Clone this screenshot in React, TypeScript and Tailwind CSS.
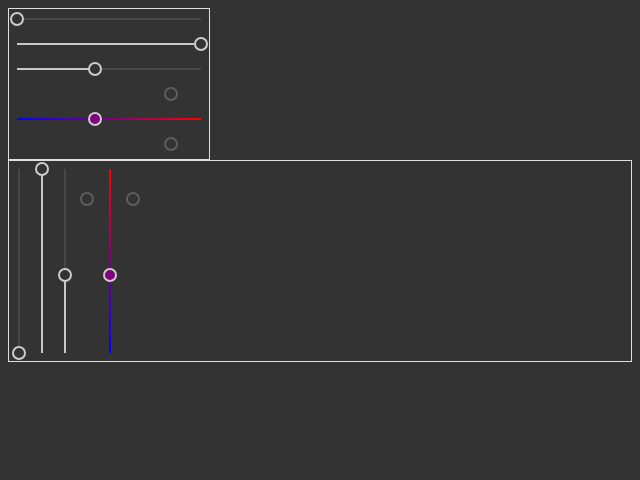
// Range sliders demo - horizontal and vertical variants on a dark page

type Variant = 'plain' | 'hidden' | 'gradient';

type SliderProps = {
  value: number; // 0..1
  variant?: Variant;
};

const TRACK = 184;

const thumbColors: Record<Variant, string> = {
  plain: 'border-[#cccccc] bg-[#333333]',
  hidden: 'border-[#5e5e5e] bg-[#333333]',
  gradient: 'border-[#cccccc] bg-[#800080]',
};

function HSlider({ value, variant = 'plain' }: SliderProps) {
  const filled = variant === 'plain' ? 'bg-[#c8c8c8]' : '';
  const rest = variant === 'plain' ? 'bg-[#474747]' : '';
  const gradient =
    variant === 'gradient'
      ? 'bg-[linear-gradient(to_right,#0000ff,#ff0000)] bg-[length:100%_2px] bg-center bg-no-repeat'
      : '';
  return (
    <div className={`ml-2 flex h-5 w-[184px] items-center ${gradient}`}>
      <div className={`h-[2px] shrink-0 ${filled}`} style={{ width: value * TRACK }} />
      <div className={`relative -mx-[7px] h-[14px] w-[14px] shrink-0 rounded-full border-2 ${thumbColors[variant]}`} />
      <div className={`h-[2px] flex-1 ${rest}`} />
    </div>
  );
}

function VSlider({ value, variant = 'plain' }: SliderProps) {
  const filled = variant === 'plain' ? 'bg-[#c8c8c8]' : '';
  const rest = variant === 'plain' ? 'bg-[#474747]' : '';
  const gradient =
    variant === 'gradient'
      ? 'bg-[linear-gradient(to_bottom,#ff0000,#0000ff)] bg-[length:2px_100%] bg-center bg-no-repeat'
      : '';
  return (
    <div className="flex h-[200px] w-5 py-2">
      <div className={`flex flex-1 flex-col items-center ${gradient}`}>
        <div className={`w-[2px] flex-1 ${rest}`} />
        <div className={`relative -my-[7px] h-[14px] w-[14px] shrink-0 rounded-full border-2 ${thumbColors[variant]}`} />
        <div className={`w-[2px] shrink-0 ${filled}`} style={{ height: value * TRACK }} />
      </div>
    </div>
  );
}

const sliders: SliderProps[] = [
  { value: 0 },
  { value: 1 },
  { value: 0.424 },
  { value: 0.837, variant: 'hidden' },
  { value: 0.424, variant: 'gradient' },
  { value: 0.837, variant: 'hidden' },
];

export default function App() {
  return (
    <div className="h-screen w-full bg-[#333333] p-2 font-['Liberation_Sans',sans-serif]">
      {/* Horizontal sliders */}
      <div className="flex h-[152px] w-[202px] flex-col gap-[5px] border border-[#e0e0e0]">
        {sliders.map((s, i) => (
          <HSlider key={i} {...s} />
        ))}
      </div>

      {/* Vertical sliders */}
      <div className="flex h-[202px] w-[624px] gap-[2.8px] border border-[#e0e0e0]">
        {sliders.map((s, i) => (
          <VSlider key={i} {...s} />
        ))}
      </div>
    </div>
  );
}
